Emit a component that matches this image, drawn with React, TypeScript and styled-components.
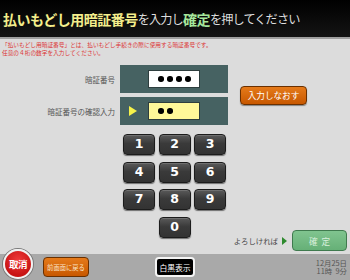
import styled, { createGlobalStyle } from "styled-components";

const GlobalStyle = createGlobalStyle`
  html, body {
    margin: 0;
    padding: 0;
    width: 350px;
    height: 280px;
    overflow: hidden;
    font-family: "Noto Sans CJK JP", "Noto Sans", sans-serif;
  }
`;

const Screen = styled.div`
  display: flex;
  flex-direction: column;
  width: 350px;
  height: 280px;
  background: #dcdcdc;
`;

const Header = styled.header`
  height: 37px;
  display: flex;
  align-items: center;
  padding-left: 3px;
  background: linear-gradient(#000, #141414);
  border-bottom: 2px solid #a0a0a0;
  white-space: nowrap;
`;

const TitleText = styled.span<{ $tone?: "yellow" | "green" }>`
  font-size: ${(p) => (p.$tone ? "14px" : "12.2px")};
  font-weight: ${(p) => (p.$tone ? 700 : 400)};
  color: ${(p) =>
    p.$tone === "yellow" ? "#f4ee8c" : p.$tone === "green" ? "#a6e89c" : "#dedede"};
  letter-spacing: ${(p) => (p.$tone ? "-0.5px" : "-0.9px")};
`;

const Body = styled.main`
  flex: 1;
  display: flex;
  flex-direction: column;
`;

const Notes = styled.div`
  padding: 2px 0 0 2px;
  font-size: 5.7px;
  line-height: 8px;
  color: #d33;
`;

const Form = styled.div`
  display: grid;
  grid-template-columns: 120px 108px auto;
  row-gap: 4px;
  margin-top: 8px;
  align-items: center;
`;

const Label = styled.div`
  text-align: right;
  padding-right: 5px;
  font-size: 7.5px;
  color: #555;
`;

const Panel = styled.div`
  height: 28px;
  display: flex;
  align-items: center;
  padding-left: 9px;
  gap: 11px;
  background: #466262;
  box-sizing: border-box;
`;

const Pointer = styled.span<{ $visible: boolean }>`
  width: 0;
  height: 0;
  border-top: 5px solid transparent;
  border-bottom: 5px solid transparent;
  border-left: 8px solid ${(p) => (p.$visible ? "#f6f24a" : "transparent")};
`;

const Field = styled.div<{ $active: boolean }>`
  width: 52px;
  height: 18px;
  box-sizing: border-box;
  display: flex;
  align-items: center;
  gap: 3.5px;
  padding-left: 9px;
  background: ${(p) => (p.$active ? "#fff899" : "#fff")};
  border: 1px solid #2e3e3e;
`;

const Dot = styled.span`
  width: 5.5px;
  height: 5.5px;
  border-radius: 50%;
  background: #000;
`;

const RetryButton = styled.button`
  grid-column: 3;
  grid-row: 1 / span 2;
  margin-left: 12px;
  width: 67px;
  height: 19px;
  padding: 0;
  border: 1px solid #6a3000;
  border-radius: 4px;
  background: linear-gradient(#e57a1a, #c85800);
  color: #fff;
  font-family: inherit;
  font-size: 8.6px;
  box-shadow: 0 1px 1px rgba(0, 0, 0, 0.4);
`;

const Lower = styled.div`
  flex: 1;
  display: flex;
  padding-left: 123px;
  margin-top: 9px;
`;

const Keypad = styled.div`
  display: grid;
  grid-template-columns: repeat(3, 32px);
  grid-auto-rows: 21px;
  column-gap: 3.5px;
  row-gap: 6.5px;
  align-content: start;
`;

const Key = styled.button<{ $col?: number }>`
  grid-column: ${(p) => p.$col ?? "auto"};
  padding: 0;
  border: 1px solid #1c1c1c;
  border-radius: 4px;
  background: linear-gradient(#5a5a5a, #3a3a3a 45%, #333);
  box-shadow: 0 1px 1px rgba(0, 0, 0, 0.5), inset 0 1px 0 rgba(255, 255, 255, 0.15);
  color: #fff;
  font-family: "DejaVu Sans", sans-serif;
  font-weight: 700;
  font-size: 12.5px;
  line-height: 1;
`;

const Confirm = styled.div`
  margin-left: auto;
  align-self: flex-end;
  display: flex;
  align-items: center;
  padding-right: 3px;
  margin-bottom: 3px;
`;

const ConfirmHint = styled.span`
  font-size: 7.4px;
  color: #444;
  margin-right: 4px;
`;

const GreenArrow = styled.span`
  width: 0;
  height: 0;
  border-top: 4.5px solid transparent;
  border-bottom: 4.5px solid transparent;
  border-left: 5px solid #2e8a2e;
  margin-right: 5px;
`;

const ConfirmButton = styled.button`
  width: 55px;
  height: 21px;
  padding: 0 0 0 4px;
  border: 1px solid #3f7a4e;
  border-radius: 4px;
  background: linear-gradient(#80c48f, #66b077);
  color: #d8f0dc;
  font-family: inherit;
  font-size: 8.6px;
  letter-spacing: 4px;
`;

const Footer = styled.footer`
  height: 26px;
  display: flex;
  align-items: center;
  padding: 0 3px;
  background: #a9a9a9;
`;

const CancelButton = styled.button`
  align-self: flex-start;
  margin-top: -5px;
  width: 30px;
  height: 30px;
  padding: 0;
  border-radius: 50%;
  border: 2px solid #f2f2f2;
  box-shadow: 0 0 0 1px #7a7a7a;
  background: radial-gradient(circle at 50% 35%, #ef3a3a, #c81414 70%);
  color: #fff;
  font-family: inherit;
  font-weight: 700;
  font-size: 9.5px;
  letter-spacing: -0.5px;
`;

const SmallButton = styled.button<{ $dark?: boolean }>`
  height: 20px;
  padding: 0;
  border-radius: 4px;
  font-family: inherit;
  border: ${(p) => (p.$dark ? "2px solid #f4f4f4" : "1px solid #6a3000")};
  background: ${(p) => (p.$dark ? "#000" : "linear-gradient(#e57a1a, #c85800)")};
  color: ${(p) => (p.$dark ? "#fff" : "#fbe6c8")};
  font-size: ${(p) => (p.$dark ? "7.8px" : "6.3px")};
  width: ${(p) => (p.$dark ? "40px" : "46px")};
  margin-left: ${(p) => (p.$dark ? "66px" : "10px")};
`;

const Clock = styled.div`
  margin-left: auto;
  text-align: right;
  font-size: 7.4px;
  line-height: 8.5px;
  color: #555;
  white-space: pre;
`;

const dots = (n: number) => Array.from({ length: n }, (_, i) => <Dot key={i} />);

export default function App() {
  return (
    <Screen>
      <GlobalStyle />
      <Header>
        <TitleText $tone="yellow">払いもどし用暗証番号</TitleText>
        <TitleText>を入力し</TitleText>
        <TitleText $tone="green">確定</TitleText>
        <TitleText>を押してください</TitleText>
      </Header>
      <Body>
        <Notes>
          「払いもどし用暗証番号」とは、払いもどし手続きの際に使用する暗証番号です。
          <br />
          任意の４桁の数字を入力してください。
        </Notes>
        <Form>
          <Label>暗証番号</Label>
          <Panel>
            <Pointer $visible={false} />
            <Field $active={false}>{dots(4)}</Field>
          </Panel>
          <RetryButton>入力しなおす</RetryButton>
          <Label>暗証番号の確認入力</Label>
          <Panel>
            <Pointer $visible />
            <Field $active>{dots(2)}</Field>
          </Panel>
        </Form>
        <Lower>
          <Keypad>
            {["1", "2", "3", "4", "5", "6", "7", "8", "9"].map((d) => (
              <Key key={d}>{d}</Key>
            ))}
            <Key $col={2}>0</Key>
          </Keypad>
          <Confirm>
            <ConfirmHint>よろしければ</ConfirmHint>
            <GreenArrow />
            <ConfirmButton>確定</ConfirmButton>
          </Confirm>
        </Lower>
      </Body>
      <Footer>
        <CancelButton>取消</CancelButton>
        <SmallButton>前画面に戻る</SmallButton>
        <SmallButton $dark>白黒表示</SmallButton>
        <Clock>{"12月25日\n11時  9分"}</Clock>
      </Footer>
    </Screen>
  );
}
